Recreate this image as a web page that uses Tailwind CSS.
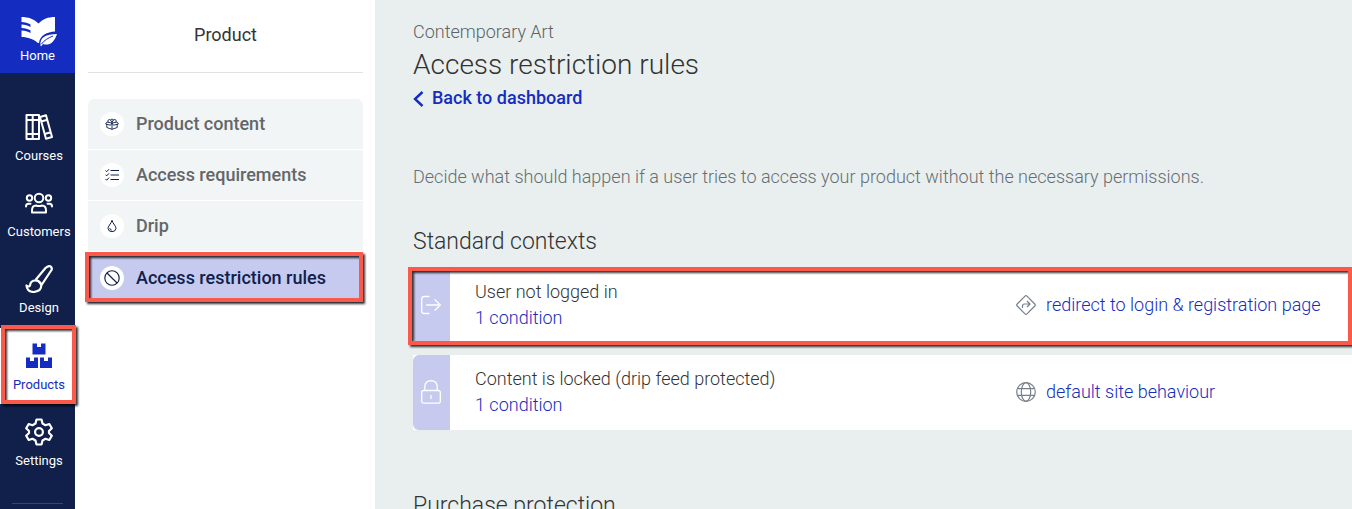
<!DOCTYPE html>
<html lang="en">
<head>
    <meta charset="UTF-8">
    <meta name="viewport" content="width=device-width, initial-scale=1.0">
    <title>Access restriction rules</title>
    <script src="https://cdn.jsdelivr.net/npm/@tailwindcss/browser@4"></script>
</head>
<body class="flex h-screen overflow-hidden bg-[#e9efef] font-[Roboto,'Liberation_Sans',sans-serif] text-lg text-[#333]">

    <!-- Main navigation -->
    <nav class="flex w-[75px] shrink-0 flex-col bg-[#10204b] text-[13px] leading-4 text-white">
        <a href="#" class="flex h-[73px] flex-col items-center bg-[#142dc0] pt-4">
            <svg class="h-8 w-10" viewBox="0 0 40 32" fill="none">
                <path fill="#fff" d="M3.500 1C10 1 16 3 20.500 7.500C25 3 30 1 37 1V15.500C29 16 22 19 21 27H20C16 23.500 10 21 3.500 21V14.500C7 14.500 10 15.500 12.500 17V14.500C10 13 7 12 3.500 12V8.500C7 8.500 10 9.500 12.500 11V8.500C10 7 7 6 3.500 6Z"/>
                <path fill="#fff" d="M22.500 29.500C21.500 21.500 28 18 39 18C36 27 31 30 25 28L23 30.500Z"/>
                <path stroke="#142dc0" d="M23.500 28C26 24.500 30 22 35 20"/>
            </svg>
            <span>Home</span>
        </a>
        <div class="mt-[27px] flex flex-col">
            <a href="#" class="flex h-[76px] flex-col items-center gap-[7px] pt-[13px] pl-[3px]">
                <svg class="h-7 w-7" viewBox="0 0 28 28" fill="none" stroke="#fff" stroke-width="2" stroke-linejoin="round">
                    <path d="M1.500 2H14V26H1.500ZM7.700 2V26M1.500 7H14M1.500 21H14"/>
                    <path d="M15 4L21 2.300L27 24L21 25.700ZM16.300 8.500L22.200 6.800M19.700 21L25.700 19.300"/>
                </svg>
                <span>Courses</span>
            </a>
            <a href="#" class="flex h-[76px] flex-col items-center gap-[7px] pt-[13px] pl-[3px]">
                <svg class="h-7 w-7" viewBox="0 0 28 28" fill="none" stroke="#fff" stroke-width="2" stroke-linecap="round" stroke-linejoin="round">
                    <circle cx="14" cy="9" r="4.300"/>
                    <circle cx="4.500" cy="9" r="2.700"/>
                    <circle cx="23.500" cy="9" r="2.700"/>
                    <path d="M7 23.500V21.500Q7 16.500 11 16.500Q14 17.700 17 16.500Q21 16.500 21 21.500V23.500ZM1 17.500Q1 14.800 3.500 14.800H5.500M27 17.500Q27 14.800 24.500 14.800H22.500"/>
                </svg>
                <span>Customers</span>
            </a>
            <a href="#" class="flex h-[76px] flex-col items-center gap-[7px] pt-[13px] pl-[3px]">
                <svg class="h-7 w-7" viewBox="0 0 28 28" fill="none" stroke="#fff" stroke-width="2.200" stroke-linejoin="round">
                    <path d="M10.500 15L20.500 3Q23 .600 25.300 1.200Q27.500 2.500 26.500 5L16.500 20M10.500 15Q15 16 16.500 20"/>
                    <path d="M10.500 15.500Q5.500 15.500 5 20.500Q4 22.500 1.500 20.500Q2 26.700 8.500 27Q16.500 26.500 16.300 20Q14.500 15.500 10.500 15.500Z"/>
                </svg>
                <span>Design</span>
            </a>
            <a href="#" class="relative flex h-[76px] flex-col items-center gap-[7px] bg-white pt-[14px] pl-[3px] text-[#142dc0]">
                <svg class="h-7 w-7" viewBox="0 0 28 28" fill="#142dc0">
                    <path d="M7.500 1.500H12V5H16V1.500H20.500V12.500H7.500ZM1 15.500H5V19H9V15.500H13V26H1ZM15 15.500H19V19H23V15.500H27V26H15Z"/>
                </svg>
                <span>Products</span>
                <span class="absolute -right-px -top-[3px] bottom-0 left-px z-10 border-4 border-[#fb594b] drop-shadow-[2px_2px_1px_rgba(0,0,0,0.8)]"></span>
            </a>
            <a href="#" class="flex h-[76px] flex-col items-center gap-[7px] pt-[14px] pl-[3px]">
                <svg class="h-7 w-7" viewBox="0 0 28 28" fill="none" stroke="#fff" stroke-width="2.200" stroke-linejoin="round">
                    <path d="M11.500 1.500H16.500L17.500 5.500L20.500 7.200L24.300 6L26.800 10.300L24 13V15L26.800 17.700L24.300 22L20.500 20.800L17.500 22.500L16.500 26.500H11.500L10.500 22.500L7.500 20.800L3.700 22L1.200 17.700L4 15V13L1.200 10.300L3.700 6L7.500 7.200L10.500 5.500Z"/>
                    <circle cx="14" cy="14" r="3.900"/>
                </svg>
                <span>Settings</span>
            </a>
        </div>
        <hr class="mx-3 mt-[23px] border-[#3b4560]">
    </nav>

    <!-- Product menu -->
    <aside class="w-[300px] shrink-0 bg-white px-3">
        <h2 class="ml-px h-[73px] border-b border-[#dfe1e3] pt-[21px] text-center leading-7">Product</h2>
        <ul class="mt-[26px] ml-px flex flex-col gap-px font-medium text-[#636768]">
            <li>
                <a href="#" class="flex h-[50px] items-center gap-3 rounded-t-md bg-[#f1f5f6] px-3">
                    <span class="flex h-6 w-6 items-center justify-center rounded-full bg-white">
                        <svg class="h-[14px] w-[14px]" viewBox="0 0 14 14" fill="none" stroke="#10204b" stroke-width=".900" stroke-linejoin="round">
                            <path d="M1.800 7V10.500L7 12.300L12.200 10.500V7M7 6V12.300M7 6L2 5L.600 7L5.500 8.200L7 6L8.500 8.200L13.400 7L12 5Z"/>
                            <path d="M3 5Q2.300 2.800 4.300 2.500Q6 2.500 7 5.500Q8 2 10 2.500Q11.800 3 11 5M5.500 2.800Q7 1.200 8.500 2.800"/>
                        </svg>
                    </span>
                    Product content
                </a>
            </li>
            <li>
                <a href="#" class="flex h-[50px] items-center gap-3 bg-[#f1f5f6] px-3">
                    <span class="flex h-6 w-6 items-center justify-center rounded-full bg-white">
                        <svg class="h-[14px] w-[14px]" viewBox="0 0 14 14" fill="none" stroke="#10204b" stroke-width="1">
                            <path d="M5.500 2.500H14M5.500 7H14M5.500 11.500H14M.500 2.500L1.700 3.700L4 1.200M.500 6.700L1.700 7.900L4 5.400M.500 11L1.700 12.200L4 9.700"/>
                        </svg>
                    </span>
                    Access requirements
                </a>
            </li>
            <li>
                <a href="#" class="flex h-[50px] items-center gap-3 bg-[#f1f5f6] px-3">
                    <span class="flex h-6 w-6 items-center justify-center rounded-full bg-white">
                        <svg class="h-[14px] w-[14px]" viewBox="0 0 14 14" fill="none" stroke="#10204b" stroke-width="1">
                            <path d="M7 1.300Q6.500 3.500 4.500 6Q3 8 3 9.300Q3.300 12.600 7 12.700Q10.700 12.600 11 9.300Q11 8 9.500 6Q7.500 3.500 7 1.300ZM4.800 9.200Q4.900 10.900 6.700 11.100"/>
                        </svg>
                    </span>
                    Drip
                </a>
            </li>
            <li class="pt-px">
                <a href="#" class="relative flex h-[50px] items-center gap-3 bg-[#c5caee] px-3 text-[#10204b]">
                    <span class="flex h-6 w-6 items-center justify-center rounded-full bg-white">
                        <svg class="h-4 w-4" viewBox="0 0 14 14" fill="none" stroke="#10204b" stroke-width="1">
                            <circle cx="7" cy="7" r="6.300"/>
                            <path d="M2.600 2.600L11.400 11.400"/>
                        </svg>
                    </span>
                    Access restriction rules
                    <span class="absolute -left-[3px] right-0 -top-px bottom-px border-4 border-[#fb594b] drop-shadow-[2px_2px_1px_rgba(0,0,0,0.8)]"></span>
                </a>
            </li>
        </ul>
    </aside>

    <!-- Rules -->
    <main class="min-w-0 flex-1 pt-[18px] pl-[38px] font-light">
        <p class="leading-7 text-[#5b6368]">Contemporary Art</p>
        <h1 class="mt-px text-[28px] leading-9">Access restriction rules</h1>
        <a href="#" class="mt-px flex items-center gap-2 leading-7 font-medium text-[#142dc0]">
            <svg class="mt-[2px] h-4 w-[11px]" viewBox="0 0 11 16" fill="none" stroke="#142dc0" stroke-width="2.400">
                <path d="M9.500 1L2 8L9.500 15"/>
            </svg>
            Back to dashboard
        </a>

        <p class="mt-[51px] leading-7 text-[#666e73]">Decide what should happen if a user tries to access your product without the necessary permissions.</p>

        <h2 class="mt-[33px] text-[23px] leading-9">Standard contexts</h2>
        <div class="mt-2 flex flex-col gap-3">
            <section class="relative flex h-[75px] bg-white">
                <div class="flex w-[37px] items-center rounded-l-md bg-[#c5caee] px-2 pb-px">
                    <svg class="h-5 w-5" viewBox="0 0 20 20" fill="none" stroke="#fff" stroke-width="1.300" stroke-linecap="round" stroke-linejoin="round">
                        <path d="M8 1.500H3Q.700 1.500 .700 4V16Q.700 18.500 3 18.500H8M5.500 10H19.300M14 4.700L19.300 10L14 15.300"/>
                    </svg>
                </div>
                <div class="flex flex-1 flex-col pt-[11px] pl-[25px] leading-[26px]">
                    <p>User not logged in</p>
                    <a href="#" class="text-[#142dc0]">1 condition</a>
                </div>
                <a href="#" class="flex w-[336px] items-center gap-[10px] pb-[2px] text-[#142dc0]">
                    <svg class="h-5 w-5" viewBox="0 0 20 20" fill="none" stroke="#76808b" stroke-width="1.200" stroke-linejoin="round">
                        <path d="M9 1.200Q10 .200 11 1.200L18.800 9Q19.800 10 18.800 11L11 18.800Q10 19.800 9 18.800L1.200 11Q.200 10 1.200 9Z"/>
                        <path d="M6.500 13V11Q6.500 9 8.500 9H13.800M11 6L14 9L11 12"/>
                    </svg>
                    redirect to login &amp; registration page
                </a>
                <span class="absolute -top-px right-0 -bottom-[2px] -left-[5px] border-4 border-[#fb594b] drop-shadow-[2px_2px_1px_rgba(0,0,0,0.8)]"></span>
            </section>
            <section class="flex h-[75px] bg-white">
                <div class="flex w-[37px] items-center rounded-l-md bg-[#c5caee] px-2 pb-px">
                    <svg class="h-6 w-5" viewBox="0 0 20 24" fill="none" stroke="#fff" stroke-width="1.300" stroke-linecap="round">
                        <rect x=".700" y="10.500" width="18.600" height="12.700" rx="2"/>
                        <path d="M3.800 10.500V6.800Q4 .900 10 .700Q16 .900 16.200 6.800V10.500M10 15.500V18.500"/>
                    </svg>
                </div>
                <div class="flex flex-1 flex-col pt-[11px] pl-[25px] leading-[26px]">
                    <p>Content is locked (drip feed protected)</p>
                    <a href="#" class="text-[#142dc0]">1 condition</a>
                </div>
                <a href="#" class="flex w-[336px] items-center gap-[10px] pb-[2px] text-[#142dc0]">
                    <svg class="h-5 w-5" viewBox="0 0 20 20" fill="none" stroke="#76808b" stroke-width="1.200">
                        <circle cx="10" cy="10" r="9.300"/>
                        <ellipse cx="10" cy="10" rx="4.700" ry="9.300"/>
                        <path d="M1.500 6.700H18.500M1.500 13.300H18.500"/>
                    </svg>
                    default site behaviour
                </a>
            </section>
        </div>

        <h2 class="mt-[58px] text-[23px] leading-9">Purchase protection</h2>
    </main>

</body>
</html>
